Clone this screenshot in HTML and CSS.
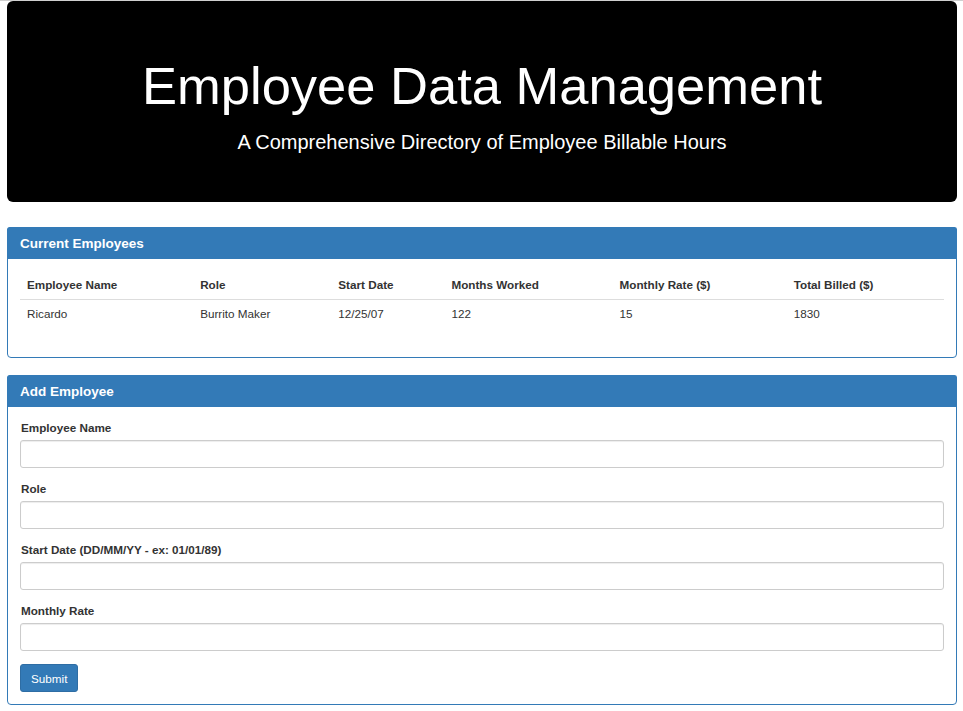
FILE: index.html
```html
<!DOCTYPE html>
<html lang="en">
<head>
<meta charset="utf-8">
<title>Employee Data Management</title>
<link rel="stylesheet" href="styles.css">
</head>
<body>
<div class="topline"></div>
<div class="container">
  <header class="jumbotron">
    <h1 class="title">Employee Data Management</h1>
    <p class="subtitle">A Comprehensive Directory of Employee Billable Hours</p>
  </header>

  <section class="panel panel-current">
    <div class="panel-heading"><h3 class="panel-title">Current Employees</h3></div>
    <div class="panel-body">
      <table class="table">
        <colgroup>
          <col class="c-name"><col class="c-role"><col class="c-start"><col class="c-months"><col class="c-rate"><col class="c-total">
        </colgroup>
        <thead>
          <tr>
            <th>Employee Name</th>
            <th>Role</th>
            <th>Start Date</th>
            <th>Months Worked</th>
            <th>Monthly Rate ($)</th>
            <th>Total Billed ($)</th>
          </tr>
        </thead>
        <tbody>
          <tr>
            <td>Ricardo</td>
            <td>Burrito Maker</td>
            <td>12/25/07</td>
            <td>122</td>
            <td>15</td>
            <td>1830</td>
          </tr>
        </tbody>
      </table>
    </div>
  </section>

  <section class="panel panel-add">
    <div class="panel-heading"><h3 class="panel-title">Add Employee</h3></div>
    <div class="panel-body">
      <form class="form">
        <div class="form-group">
          <label class="label" for="name">Employee Name</label>
          <input class="input" id="name" type="text">
        </div>
        <div class="form-group">
          <label class="label" for="role">Role</label>
          <input class="input" id="role" type="text">
        </div>
        <div class="form-group">
          <label class="label" for="start">Start Date (DD/MM/YY - ex: 01/01/89)</label>
          <input class="input" id="start" type="text">
        </div>
        <div class="form-group last">
          <label class="label" for="rate">Monthly Rate</label>
          <input class="input" id="rate" type="text">
        </div>
        <button class="btn" type="button">Submit</button>
      </form>
    </div>
  </section>
</div>
</body>
</html>
```
FILE: styles.css
```css
* { box-sizing: border-box; }
html, body { margin: 0; padding: 0; background: #fff; }
body {
  font-family: "Liberation Sans", Arial, Helvetica, sans-serif;
  font-size: 11.7px;
  line-height: 17px;
  color: #333;
}
.topline { height: 1px; background: #cfcfcf; }
.container { padding: 0 6px 0 7px; }

.jumbotron {
  background: #000;
  color: #fff;
  border-radius: 6px;
  text-align: center;
  height: 201px;
  padding-top: 55px;
  margin-bottom: 25px;
}
.title {
  margin: 0;
  font-size: 52.5px;
  line-height: 59px;
  font-weight: 400;
}
.subtitle {
  margin: 14px 0 0;
  font-size: 20px;
  line-height: 27px;
}

.panel {
  border: 1px solid #337ab7;
  border-radius: 4px;
  margin-bottom: 17px;
}
.panel-heading {
  background: #337ab7;
  color: #fff;
  padding: 8px 12px 0;
  margin: -1px -1px 0;
  border-radius: 3px 3px 0 0;
  border: 1px solid #337ab7;
  border-bottom: 0;
  box-sizing: content-box;
  height: 23px;
}
.panel-title {
  margin: 0;
  font-size: 13.5px;
  line-height: 16px;
  font-weight: 700;
}
.panel-body { padding: 12px; }

.table {
  width: 100%;
  border-collapse: collapse;
  margin-bottom: 14px;
  table-layout: fixed;
}
.c-name { width: 173px; }
.c-role { width: 138px; }
.c-start { width: 113px; }
.c-months { width: 168px; }
.c-rate { width: 174px; }
.c-total { width: 157px; }
.table th {
  text-align: left;
  font-weight: 700;
  padding: 5px 7px 6px;
  border-bottom: 1px solid #ddd;
}
.table td {
  padding: 5px 7px 9px;
}

.form-group { margin-bottom: 12px; }
.form-group.last { margin-bottom: 13px; }
.label {
  display: block;
  font-weight: 700;
  margin-bottom: 4px;
  padding-left: 1px;
}
.input {
  display: block;
  width: 100%;
  height: 28px;
  border: 1px solid #ccc;
  border-radius: 3px;
  background: #fff;
  box-shadow: inset 0 1px 1px rgba(0,0,0,.075);
  font: inherit;
  padding: 4px 10px;
}
.btn {
  display: block;
  height: 28px;
  padding: 0 10px;
  font: inherit;
  color: #fff;
  background: #337ab7;
  border: 1px solid #2e6da4;
  border-radius: 3px;
}
```
